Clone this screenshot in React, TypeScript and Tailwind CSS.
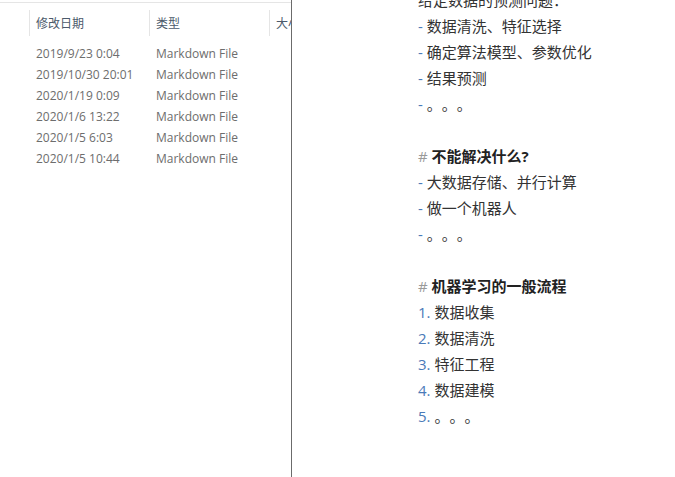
import React from 'react'

const rows = [
  ['2019/9/23 0:04', 'Markdown File'],
  ['2019/10/30 20:01', 'Markdown File'],
  ['2020/1/19 0:09', 'Markdown File'],
  ['2020/1/6 13:22', 'Markdown File'],
  ['2020/1/5 6:03', 'Markdown File'],
  ['2020/1/5 10:44', 'Markdown File'],
]

type Line =
  | { kind: 'text'; text: string }
  | { kind: 'dash'; text: string }
  | { kind: 'head'; text: string }
  | { kind: 'num'; n: number; text: string }
  | { kind: 'blank' }

const lines: Line[] = [
  { kind: 'text', text: '给定数据的预测问题：' },
  { kind: 'dash', text: '数据清洗、特征选择' },
  { kind: 'dash', text: '确定算法模型、参数优化' },
  { kind: 'dash', text: '结果预测' },
  { kind: 'dash', text: '。。。' },
  { kind: 'blank' },
  { kind: 'head', text: '不能解决什么?' },
  { kind: 'dash', text: '大数据存储、并行计算' },
  { kind: 'dash', text: '做一个机器人' },
  { kind: 'dash', text: '。。。' },
  { kind: 'blank' },
  { kind: 'head', text: '机器学习的一般流程' },
  { kind: 'num', n: 1, text: '数据收集' },
  { kind: 'num', n: 2, text: '数据清洗' },
  { kind: 'num', n: 3, text: '特征工程' },
  { kind: 'num', n: 4, text: '数据建模' },
  { kind: 'num', n: 5, text: '。。。' },
]

export default function App() {
  return (
    <div
      className="flex h-[477px] w-[675px] overflow-hidden bg-white"
      style={{ fontFamily: "'Open Sans', 'Noto Sans CJK SC', sans-serif" }}
    >
      {/* 文件列表 */}
      <div className="w-[291px] shrink-0 overflow-hidden">
        <div className="mt-[2px] h-px bg-[#e5e5e5]" />
        <div className="flex pl-[29px] pt-[7px]">
          {['修改日期', '类型', '大小'].map((h) => (
            <div
              key={h}
              className="flex h-[26px] w-[120px] shrink-0 items-center border-l border-[#e5e5e5] pl-[6px] pt-px text-[12px] text-[#4c5a6b]"
            >
              {h}
            </div>
          ))}
        </div>
        <div className="mt-[7px]">
          {rows.map(([d, t], i) => (
            <div key={i} className="flex h-[21px] items-center pl-[36px] text-[12px] text-[#6d6d6d]">
              <span className="w-[120px]">{d}</span>
              <span>{t}</span>
            </div>
          ))}
        </div>
      </div>

      {/* 编辑区 */}
      <div className="flex-1 border-l border-[#6b6b6b] pl-[126px]">
        <div className="-mt-[13px] text-[15px] text-[#333] [text-spacing-trim:space-all]">
          {lines.map((l, i) => {
            if (l.kind === 'blank') return <div key={i} className="h-[26px]" />
            if (l.kind === 'text')
              return (
                <div key={i} className="h-[26px] leading-[26px]">
                  {l.text}
                </div>
              )
            if (l.kind === 'dash')
              return (
                <div key={i} className="h-[26px] leading-[26px]">
                  <span className="text-[#4a7ab8]">- </span>
                  {l.text}
                </div>
              )
            if (l.kind === 'head')
              return (
                <div key={i} className="h-[26px] leading-[26px]">
                  <span className="text-[#999]"># </span>
                  <span className="font-bold text-[#222]">{l.text}</span>
                </div>
              )
            return (
              <div key={i} className="h-[26px] leading-[26px]">
                <span className="text-[#4a7ab8]">{l.n}. </span>
                {l.text}
              </div>
            )
          })}
        </div>
      </div>
    </div>
  )
}
